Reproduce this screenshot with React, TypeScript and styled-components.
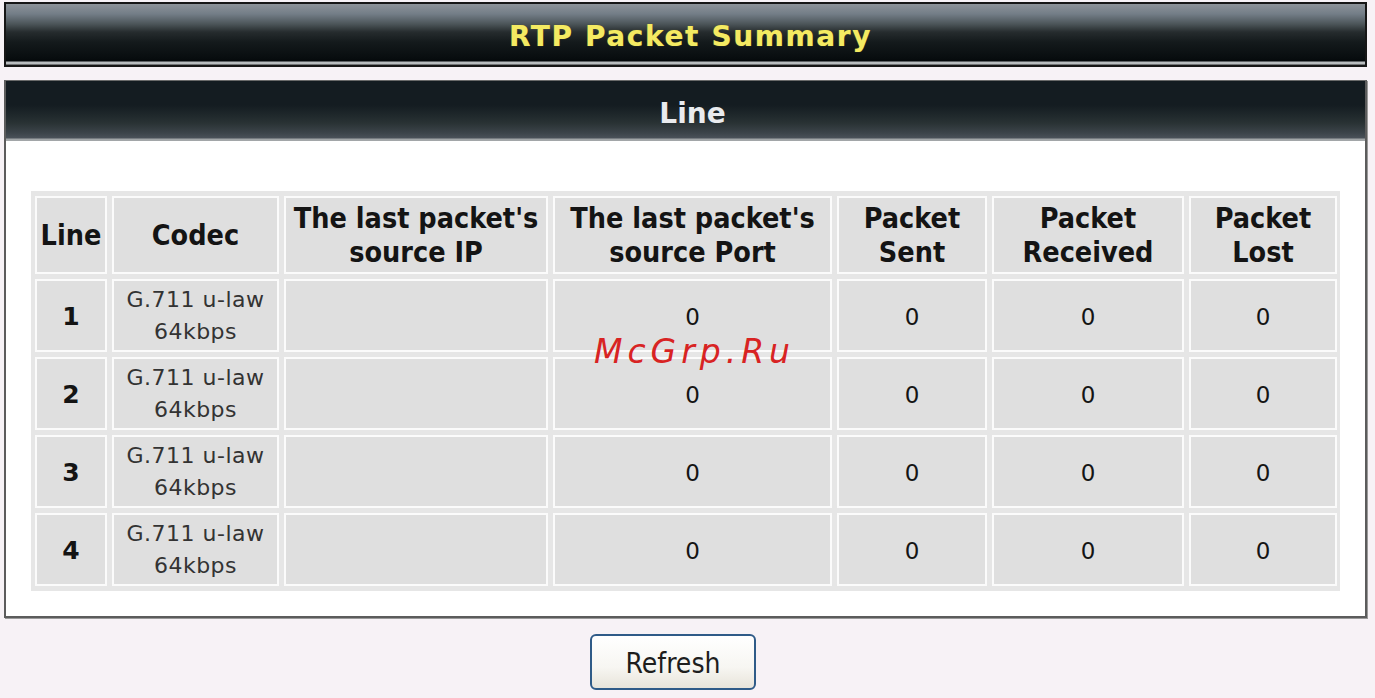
import React from 'react';
import styled, { createGlobalStyle } from 'styled-components';

const GlobalStyle = createGlobalStyle`
  html, body {
    margin: 0;
    padding: 0;
    background: #f7f2f6;
  }
  body {
    font-family: 'DejaVu Sans', Verdana, sans-serif;
  }
`;

const Page = styled.div`
  padding: 2px 8px 0 4px;
  position: relative;
`;

const TitleBar = styled.div`
  height: 61px;
  border: 2px solid #161616;
  background: linear-gradient(
    to bottom,
    #8d9399 0px,
    #737d87 10px,
    #4c5559 20px,
    #262c2e 28px,
    #141a1c 38px,
    #080d0f 54px,
    #05090b 57px,
    #b9bdbf 58px,
    #b9bdbf 60px,
    #2a2a2a 61px
  );
  display: flex;
  align-items: center;
  justify-content: center;
`;

const TitleText = styled.h1`
  margin: 0;
  padding: 3px 0 0 10px;
  font-family: 'DejaVu Sans', Verdana, sans-serif;
  font-weight: bold;
  font-size: 28px;
  letter-spacing: 1.6px;
  color: #f4ea62;
  text-shadow: 0 0 1px #6b6a2a;
`;

const Panel = styled.section`
  margin-top: 13px;
  border: 2px solid #5c5c5c;
  border-top: 1px solid #6a6a6a;
  box-shadow: 1px 1px 0 #9a9a9a;
  background: #ffffff;
`;

const PanelHeader = styled.div`
  height: 60px;
  background: linear-gradient(
    to bottom,
    #141c21 0px,
    #141c21 24px,
    #1f282b 34px,
    #293234 42px,
    #3c444a 52px,
    #4a5159 57px,
    #a2a6a8 58px,
    #a2a6a8 60px
  );
  display: flex;
  align-items: center;
  justify-content: center;
`;

const PanelTitle = styled.h2`
  margin: 0;
  padding: 4px 0 0 14px;
  font-family: 'DejaVu Sans', Verdana, sans-serif;
  font-weight: bold;
  font-size: 28px;
  color: #e9ebee;
`;

const PanelBody = styled.div`
  padding: 50px 25px 25px 25px;
`;

const Grid = styled.div`
  display: grid;
  grid-template-columns: 72px 167px 264px 279px 150px 192px 148px;
  grid-template-rows: 78px repeat(4, 73px);
  gap: 5px;
  padding: 5px 4px;
  background: #e6e6e6;
`;

const Cell = styled.div<{ $kind?: 'head' | 'num' | 'codec' | 'value' }>`
  background: #dfdfdf;
  border: 2px solid #fbfbfb;
  display: flex;
  align-items: center;
  justify-content: center;
  text-align: center;
  padding-top: ${({ $kind }) => ($kind === 'value' || $kind === 'num' ? 2 : 1)}px;
  color: ${({ $kind }) => ($kind === 'codec' ? '#333333' : '#141414')};
  font-family: ${({ $kind }) =>
    $kind === 'head'
      ? "'DejaVu Sans Condensed', 'DejaVu Sans', sans-serif"
      : "'DejaVu Sans', Verdana, sans-serif"};
  font-weight: ${({ $kind }) =>
    $kind === 'head' || $kind === 'num' ? 'bold' : 'normal'};
  font-size: ${({ $kind }) =>
    $kind === 'head' ? 28.5 : $kind === 'num' ? 25 : $kind === 'value' ? 23 : 22}px;
  line-height: ${({ $kind }) => ($kind === 'head' ? 34 : 32)}px;
  letter-spacing: ${({ $kind }) => ($kind === 'codec' ? '0.5px' : '0')};
`;

const ButtonRow = styled.div`
  padding: 16px 0 0 586px;
`;

const RefreshButton = styled.button`
  width: 166px;
  height: 56px;
  border: 2px solid #2f5b88;
  border-radius: 6px;
  background: linear-gradient(to bottom, #ffffff 0%, #f7f6f2 60%, #e8e4da 100%);
  font-family: 'DejaVu Sans Condensed', 'DejaVu Sans', sans-serif;
  font-size: 28px;
  color: #1e1e1e;
  padding: 2px 0 0;
  cursor: pointer;
`;

const Watermark = styled.div`
  position: absolute;
  left: 594px;
  top: 332px;
  font-family: 'DejaVu Sans', sans-serif;
  font-style: italic;
  font-size: 33px;
  letter-spacing: 5px;
  color: #d82323;
  pointer-events: none;
`;

const headers: string[][] = [
  ['Line'],
  ['Codec'],
  ["The last packet's", 'source IP'],
  ["The last packet's", 'source Port'],
  ['Packet', 'Sent'],
  ['Packet', 'Received'],
  ['Packet', 'Lost'],
];

const lines = [1, 2, 3, 4].map((n) => ({
  line: n,
  codec: ['G.711 u-law', '64kbps'],
  ip: '',
  port: 0,
  sent: 0,
  received: 0,
  lost: 0,
}));

const App = () => {
  return (
    <Page>
      <GlobalStyle />
      <TitleBar>
        <TitleText>RTP Packet Summary</TitleText>
      </TitleBar>
      <Panel>
        <PanelHeader>
          <PanelTitle>Line</PanelTitle>
        </PanelHeader>
        <PanelBody>
          <Grid>
            {headers.map((h) => (
              <Cell key={h.join(' ')} $kind="head">
                <span>
                  {h.map((part, i) => (
                    <React.Fragment key={part}>
                      {i > 0 && <br />}
                      {part}
                    </React.Fragment>
                  ))}
                </span>
              </Cell>
            ))}
            {lines.map((r) => (
              <React.Fragment key={r.line}>
                <Cell $kind="num">{r.line}</Cell>
                <Cell $kind="codec">
                  <span>
                    {r.codec[0]}
                    <br />
                    {r.codec[1]}
                  </span>
                </Cell>
                <Cell $kind="value">{r.ip}</Cell>
                <Cell $kind="value">{r.port}</Cell>
                <Cell $kind="value">{r.sent}</Cell>
                <Cell $kind="value">{r.received}</Cell>
                <Cell $kind="value">{r.lost}</Cell>
              </React.Fragment>
            ))}
          </Grid>
        </PanelBody>
      </Panel>
      <ButtonRow>
        <RefreshButton>Refresh</RefreshButton>
      </ButtonRow>
      <Watermark>McGrp.Ru</Watermark>
    </Page>
  );
};

export default App;
